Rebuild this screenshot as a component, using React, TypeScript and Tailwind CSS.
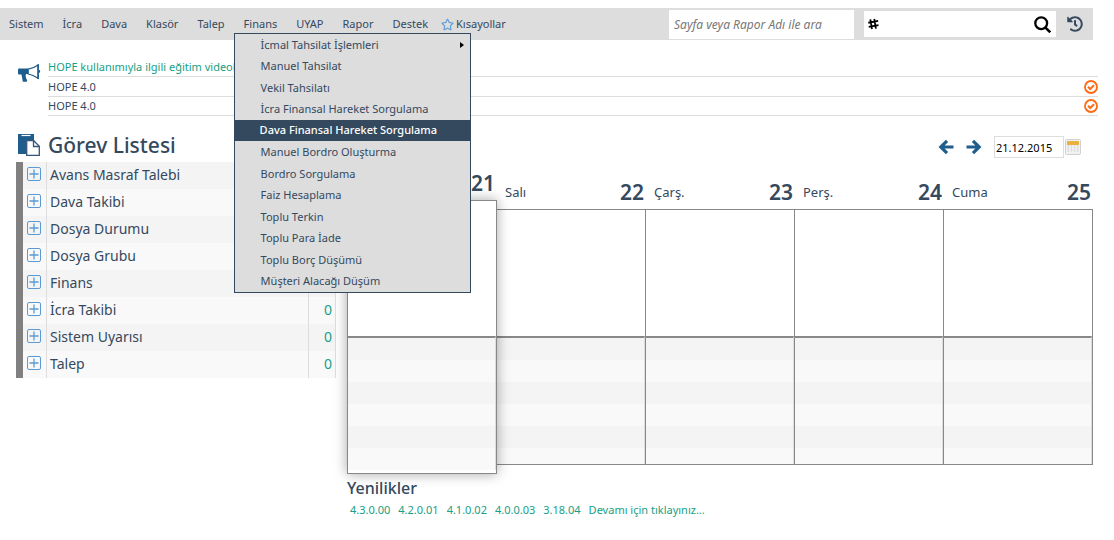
import { FaRegStar, FaHistory } from "react-icons/fa";

const menuBefore = ["Sistem", "İcra", "Dava", "Klasör", "Talep"];
const menuAfter = ["UYAP", "Rapor", "Destek"];

const financeMenu = [
  "İcmal Tahsilat İşlemleri",
  "Manuel Tahsilat",
  "Vekil Tahsilatı",
  "İcra Finansal Hareket Sorgulama",
  "Dava Finansal Hareket Sorgulama",
  "Manuel Bordro Oluşturma",
  "Bordro Sorgulama",
  "Faiz Hesaplama",
  "Toplu Terkin",
  "Toplu Para İade",
  "Toplu Borç Düşümü",
  "Müşteri Alacağı Düşüm",
];
const activeItem = "Dava Finansal Hareket Sorgulama";

const tasks: { name: string; count?: number }[] = [
  { name: "Avans Masraf Talebi" },
  { name: "Dava Takibi" },
  { name: "Dosya Durumu" },
  { name: "Dosya Grubu" },
  { name: "Finans" },
  { name: "İcra Takibi", count: 0 },
  { name: "Sistem Uyarısı", count: 0 },
  { name: "Talep", count: 0 },
];

const days = [
  { name: "", date: 21 },
  { name: "Salı", date: 22 },
  { name: "Çarş.", date: 23 },
  { name: "Perş.", date: 24 },
  { name: "Cuma", date: 25 },
];

const versions = ["4.3.0.00", "4.2.0.01", "4.1.0.02", "4.0.0.03", "3.18.04"];

function Megaphone() {
  return (
    <svg width="23" height="20" viewBox="0 0 23 20" aria-hidden="true">
      <path d="M1.200 4.500h9.300v5.500H8.200l-.6 1.200.4 3 1.200 2-.5 1.500H4.800L3.500 10.500H1.200C.4 10.500 0 10 0 9V6c0-1 .4-1.500 1.200-1.500z" fill="#1f5d8c" />
      <path d="M10.200 5.200C14 4.600 17.200 3 20 .9v13.300c-2.900-2-6.200-3.600-9.800-4.200z" fill="#fff" stroke="#1f5d8c" strokeWidth="1.200" />
      <path d="M20.200.3v14.800" stroke="#1f5d8c" strokeWidth="1.400" />
      <path d="M20.800 5.800c1.800.2 1.800 3 0 3.200z" fill="#1f5d8c" />
    </svg>
  );
}

function Clipboard() {
  return (
    <svg width="22" height="22" viewBox="0 0 22 22" aria-hidden="true">
      <path d="M0 0h16v6H8v14H0z" fill="#1f5d8c" />
      <path d="M3.500 1.500h9" stroke="#fff" strokeWidth="1.200" />
      <path d="M8.700 6.700h7l5.600 5.600v9H8.700z" fill="#fff" stroke="#34557a" strokeWidth="1.300" />
      <path d="M15.500 6.700v5.800h5.800" fill="none" stroke="#34557a" strokeWidth="1.300" />
    </svg>
  );
}

function Hash() {
  return (
    <svg width="12" height="12" viewBox="0 0 12 12" fill="none" stroke="#000" strokeWidth="2" aria-hidden="true">
      <path d="M2.600 .8l1.900 10.800M7 .4l1.900 10.800M.3 4.600l11-2M.8 9.200l11-2" />
    </svg>
  );
}

function SearchIcon() {
  return (
    <svg width="17" height="17" viewBox="0 0 17 17" fill="none" stroke="#000" aria-hidden="true">
      <circle cx="7.200" cy="7.200" r="5.900" strokeWidth="2.300" />
      <path d="M11.200 11.400l5 4.900" strokeWidth="2.600" />
    </svg>
  );
}

function PlusBox() {
  return (
    <svg width="14" height="14" viewBox="0 0 14 14" fill="none" stroke="#5b9bd5" aria-hidden="true">
      <rect x=".5" y=".5" width="13" height="13" rx="1.500" />
      <path d="M7 2.500v9M2.500 7h9" strokeWidth="1.300" />
    </svg>
  );
}

function Arrow({ right = false }: { right?: boolean }) {
  return (
    <svg width="16" height="16" viewBox="0 0 16 16" fill="none" stroke="#1f5d8c" strokeWidth="3.200" aria-hidden="true">
      <path d={right ? "M.5 8h12.500M7 1.800L13.200 8 7 14.200" : "M15.500 8H3M9 1.800L2.800 8 9 14.200"} />
    </svg>
  );
}

function CheckRing() {
  return (
    <svg width="14" height="14" viewBox="0 0 14 14" fill="none" stroke="#ff6a13" aria-hidden="true">
      <circle cx="7" cy="7" r="6" strokeWidth="1.800" />
      <path d="M4 6.800l2.200 2.200 3.900-3.900" strokeWidth="2" />
    </svg>
  );
}

function CalendarIcon() {
  return (
    <svg width="16" height="16" viewBox="0 0 16 16" aria-hidden="true">
      <rect x=".5" y=".5" width="15" height="15" rx="1" fill="#f2f2f2" stroke="#d0d0d0" />
      <rect x="2" y="2" width="12" height="4" rx=".5" fill="#eab13c" />
      <path d="M2.500 6h11v7h-11z" fill="#dedede" />
      <path d="M5 6v7M8 6v7M11 6v7" stroke="#fff" />
    </svg>
  );
}

export default function App() {
  return (
    <div className="bg-white pt-2 font-['Noto_Sans','Open_Sans',sans-serif] text-xs text-[#34495e]">
      <header className="mr-[21px] flex h-8 items-center bg-[#dddddd] pl-[9px]">
        <nav className="flex grow items-center gap-[19px] text-[11px]">
          {menuBefore.map((m) => (
            <a key={m} href="#">{m}</a>
          ))}
          <div className="relative">
            <a href="#">Finans</a>
            <ul className="absolute top-4 -left-[10px] z-20 grid h-[260px] w-[237px] grid-rows-12 border border-[#34495e] bg-[#dddddd]">
              {financeMenu.map((item, i) => (
                <li
                  key={item}
                  className={
                    item === activeItem
                      ? "flex items-center justify-between bg-[#34495e] pr-[6px] pl-[25px] font-medium text-white"
                      : "flex items-center justify-between pt-px pr-[6px] pl-[26px]"
                  }
                >
                  <a href="#" className="whitespace-nowrap">{item}</a>
                  {i === 0 && (
                    <svg width="4" height="6" viewBox="0 0 4 6" aria-hidden="true">
                      <path d="M0 0l4 3-4 3z" fill="#000" />
                    </svg>
                  )}
                </li>
              ))}
            </ul>
          </div>
          {menuAfter.map((m) => (
            <a key={m} href="#">{m}</a>
          ))}
          <a href="#" className="-ml-[6px] flex items-center gap-[2px]">
            <FaRegStar size={13} color="#5b9bd5" />
            Kısayollar
          </a>
        </nav>
        <input
          aria-label="Sayfa veya Rapor Adı ile ara"
          placeholder="Sayfa veya Rapor Adı ile ara"
          className="h-[29px] w-[185px] bg-white px-[5px] text-xs italic outline-none placeholder:text-[#777777]"
        />
        <div className="ml-[10px] flex h-[26px] w-48 items-center bg-white pr-[5px] pl-1">
          <Hash />
          <input aria-label="Numara ile ara" className="min-w-0 grow outline-none" />
          <button aria-label="Ara"><SearchIcon /></button>
        </div>
        <button aria-label="Geçmiş" className="mr-[10px] ml-[11px]">
          <FaHistory size={16} />
        </button>
      </header>

      <section className="mt-[18px] mr-4 ml-[18px] flex gap-[7px]">
        <div className="mt-[6px] w-[23px] shrink-0"><Megaphone /></div>
        <ul className="grow text-[11px]">
          <li className="flex h-[19px] items-center border-b border-[#dddddd]">
            <a href="#" className="text-[#16a085]">HOPE kullanımıyla ilgili eğitim videoları</a>
          </li>
          <li className="flex h-5 items-center justify-between border-b border-[#dddddd]">
            <a href="#" className="pt-px">HOPE 4.0</a>
            <button aria-label="Okundu"><CheckRing /></button>
          </li>
          <li className="flex h-[19px] items-center justify-between border-b border-[#dddddd]">
            <a href="#">HOPE 4.0</a>
            <button aria-label="Okundu"><CheckRing /></button>
          </li>
        </ul>
      </section>

      <main className="mt-[14px] mr-[21px] ml-4 flex items-start gap-[11px]">
        <section className="w-80 shrink-0">
          <h1 className="flex h-8 items-center gap-2 pb-[3px] pl-[2px] text-[21px] leading-7 font-medium">
            <Clipboard />
            Görev Listesi
          </h1>
          <table className="w-full table-fixed border-separate border-spacing-0 text-sm">
            <tbody>
              {tasks.map((t) => (
                <tr key={t.name} className="h-[27px] odd:bg-[#f4f4f4] even:bg-[#f9f9f9]">
                  <td className="w-[31px] border-r border-l-[7px] border-r-[#dddddd] border-l-[#808080] p-0 align-middle">
                    <button aria-label={`${t.name} aç`} className="flex w-full pb-[3px] pl-1"><PlusBox /></button>
                  </td>
                  <td className="p-0 pb-[2px] pl-[3px] leading-5">{t.name}</td>
                  <td className="w-7 border-x border-[#dddddd] p-0 pr-[3px] pb-[2px] text-right leading-5 text-[#16a085]">{t.count}</td>
                </tr>
              ))}
            </tbody>
          </table>
        </section>

        <section className="grow">
          <div className="flex h-[34px] items-center justify-end pr-3">
            <button aria-label="Önceki hafta"><Arrow /></button>
            <button aria-label="Sonraki hafta" className="ml-3"><Arrow right /></button>
            <input
              aria-label="Tarih"
              defaultValue="21.12.2015"
              className="ml-3 h-[22px] w-[70px] border border-[#dddddd] px-px text-[11px] text-black outline-none"
            />
            <button aria-label="Takvimi aç" className="ml-[1px]"><CalendarIcon /></button>
          </div>

          <div className="mt-[9px] mr-px grid grid-cols-5 items-center">
            {days.map((d, i) => {
              const today = i === 0;
              return (
                <div key={d.date} className={today ? "relative z-10 -mr-px" : "-mr-px"}>
                  <div className="flex h-[27px] items-center justify-between pr-[2px] pb-[6px] pl-[9px]">
                    <span className="text-[13px]">{d.name}</span>
                    <span className="text-[21px] leading-[21px] font-semibold">{d.date}</span>
                  </div>
                  <div className={today ? "border border-[#888888] bg-white pb-[3px] shadow-[0_0_12px_rgba(0,0,0,0.35)]" : "border border-[#888888] bg-white"}>
                    <div className={today ? "h-[135px]" : "h-[126px]"} />
                    <div
                      className={
                        today
                          ? "h-[134px] border-t-2 border-r border-t-[#888888] border-r-[#dddddd] bg-[repeating-linear-gradient(to_bottom,#f4f4f4_0_22px,#f9f9f9_22px_44px)]"
                          : "h-[128px] border-t-2 border-r border-t-[#888888] border-r-[#dddddd] bg-[repeating-linear-gradient(to_bottom,#f4f4f4_0_22px,#f9f9f9_22px_44px)]"
                      }
                    />
                  </div>
                </div>
              );
            })}
          </div>

          <h2 className="mt-[2px] text-base leading-6 font-medium">Yenilikler</h2>
          <div className="flex gap-2 pl-[3px] text-[11px] leading-5 text-[#16a085]">
            {versions.map((v) => (
              <a key={v} href="#">{v}</a>
            ))}
            <a href="#">Devamı için tıklayınız...</a>
          </div>
        </section>
      </main>
    </div>
  );
}
